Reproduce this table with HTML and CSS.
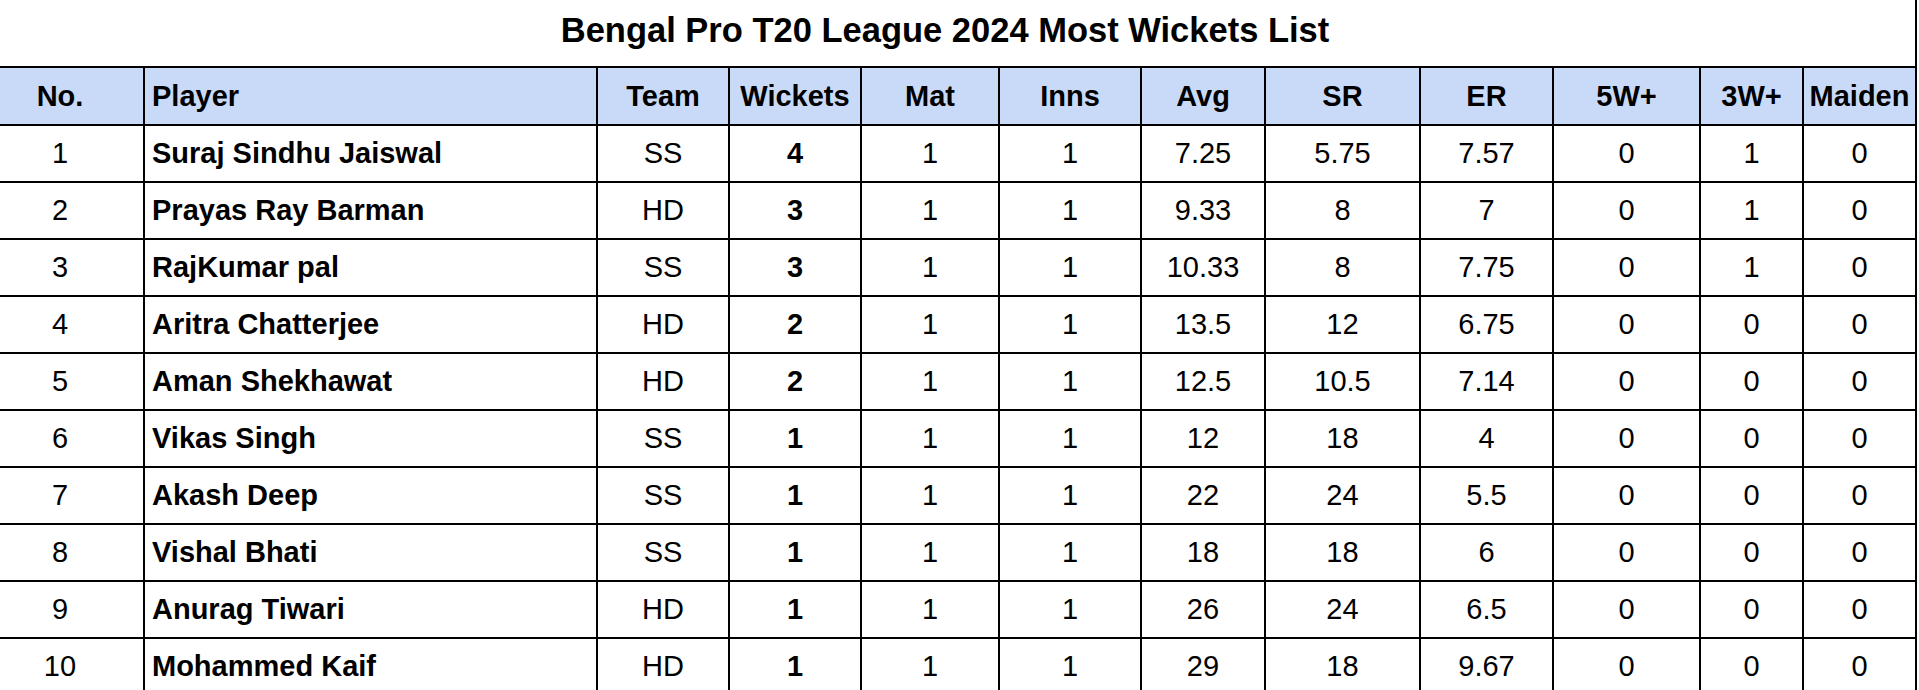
FILE: index.html
```html
<!DOCTYPE html>
<html lang="en">
<head>
<meta charset="utf-8">
<title>Bengal Pro T20 League 2024 Most Wickets List</title>
<link rel="stylesheet" href="styles.css">
</head>
<body>
<div class="sheet">
  <div class="title">Bengal Pro T20 League 2024 Most Wickets List</div>
  <table class="grid">
    <thead>
      <tr class="head-row">
        <th class="c-no">No.</th>
        <th class="c-player left">Player</th>
        <th class="c-team">Team</th>
        <th class="c-wk">Wickets</th>
        <th class="c-mat">Mat</th>
        <th class="c-inns">Inns</th>
        <th class="c-avg">Avg</th>
        <th class="c-sr">SR</th>
        <th class="c-er">ER</th>
        <th class="c-5w">5W+</th>
        <th class="c-3w">3W+</th>
        <th class="c-md">Maiden</th>
      </tr>
    </thead>
    <tbody>
      <tr><td>1</td><td class="left b">Suraj Sindhu Jaiswal</td><td>SS</td><td class="b">4</td><td>1</td><td>1</td><td>7.25</td><td>5.75</td><td>7.57</td><td>0</td><td>1</td><td>0</td></tr>
      <tr><td>2</td><td class="left b">Prayas Ray Barman</td><td>HD</td><td class="b">3</td><td>1</td><td>1</td><td>9.33</td><td>8</td><td>7</td><td>0</td><td>1</td><td>0</td></tr>
      <tr><td>3</td><td class="left b">RajKumar pal</td><td>SS</td><td class="b">3</td><td>1</td><td>1</td><td>10.33</td><td>8</td><td>7.75</td><td>0</td><td>1</td><td>0</td></tr>
      <tr><td>4</td><td class="left b">Aritra Chatterjee</td><td>HD</td><td class="b">2</td><td>1</td><td>1</td><td>13.5</td><td>12</td><td>6.75</td><td>0</td><td>0</td><td>0</td></tr>
      <tr><td>5</td><td class="left b">Aman Shekhawat</td><td>HD</td><td class="b">2</td><td>1</td><td>1</td><td>12.5</td><td>10.5</td><td>7.14</td><td>0</td><td>0</td><td>0</td></tr>
      <tr><td>6</td><td class="left b">Vikas Singh</td><td>SS</td><td class="b">1</td><td>1</td><td>1</td><td>12</td><td>18</td><td>4</td><td>0</td><td>0</td><td>0</td></tr>
      <tr><td>7</td><td class="left b">Akash Deep</td><td>SS</td><td class="b">1</td><td>1</td><td>1</td><td>22</td><td>24</td><td>5.5</td><td>0</td><td>0</td><td>0</td></tr>
      <tr><td>8</td><td class="left b">Vishal Bhati</td><td>SS</td><td class="b">1</td><td>1</td><td>1</td><td>18</td><td>18</td><td>6</td><td>0</td><td>0</td><td>0</td></tr>
      <tr><td>9</td><td class="left b">Anurag Tiwari</td><td>HD</td><td class="b">1</td><td>1</td><td>1</td><td>26</td><td>24</td><td>6.5</td><td>0</td><td>0</td><td>0</td></tr>
      <tr><td>10</td><td class="left b">Mohammed Kaif</td><td>HD</td><td class="b">1</td><td>1</td><td>1</td><td>29</td><td>18</td><td>9.67</td><td>0</td><td>0</td><td>0</td></tr>
    </tbody>
  </table>
</div>
</body>
</html>
```
FILE: styles.css
```css
html, body {
  margin: 0;
  padding: 0;
  background: #ffffff;
  overflow: hidden;
}

body {
  font-family: "Liberation Sans", Arial, sans-serif;
  color: #000000;
}

.sheet {
  width: 1942px;
  margin-left: -25px;
}

.title {
  height: 61px;
  line-height: 61px;
  padding-bottom: 5px;
  text-align: center;
  font-size: 34.5px;
  font-weight: bold;
  border-right: 2px solid #000000;
  box-sizing: content-box;
  width: 1940px;
}

.grid {
  border-collapse: collapse;
  table-layout: fixed;
  width: 1942px;
  font-size: 29px;
}

.grid th,
.grid td {
  border: 2px solid #000000;
  text-align: center;
  vertical-align: middle;
  padding: 0;
  white-space: nowrap;
  overflow: hidden;
}

.grid th {
  background: #c9daf8;
  font-weight: bold;
  height: 56px;
}

.grid td {
  font-weight: normal;
  height: 55px;
}

.grid .left {
  text-align: left;
  padding-left: 7px;
}

.grid .b {
  font-weight: bold;
}

.c-no { width: 166px; }
.c-player { width: 444px; }
.c-team { width: 130px; }
.c-wk { width: 130px; }
.c-mat { width: 136px; }
.c-inns { width: 140px; }
.c-avg { width: 122px; }
.c-sr { width: 153px; }
.c-er { width: 131px; }
.c-5w { width: 145px; }
.c-3w { width: 101px; }
.c-md { width: 111px; }
```
